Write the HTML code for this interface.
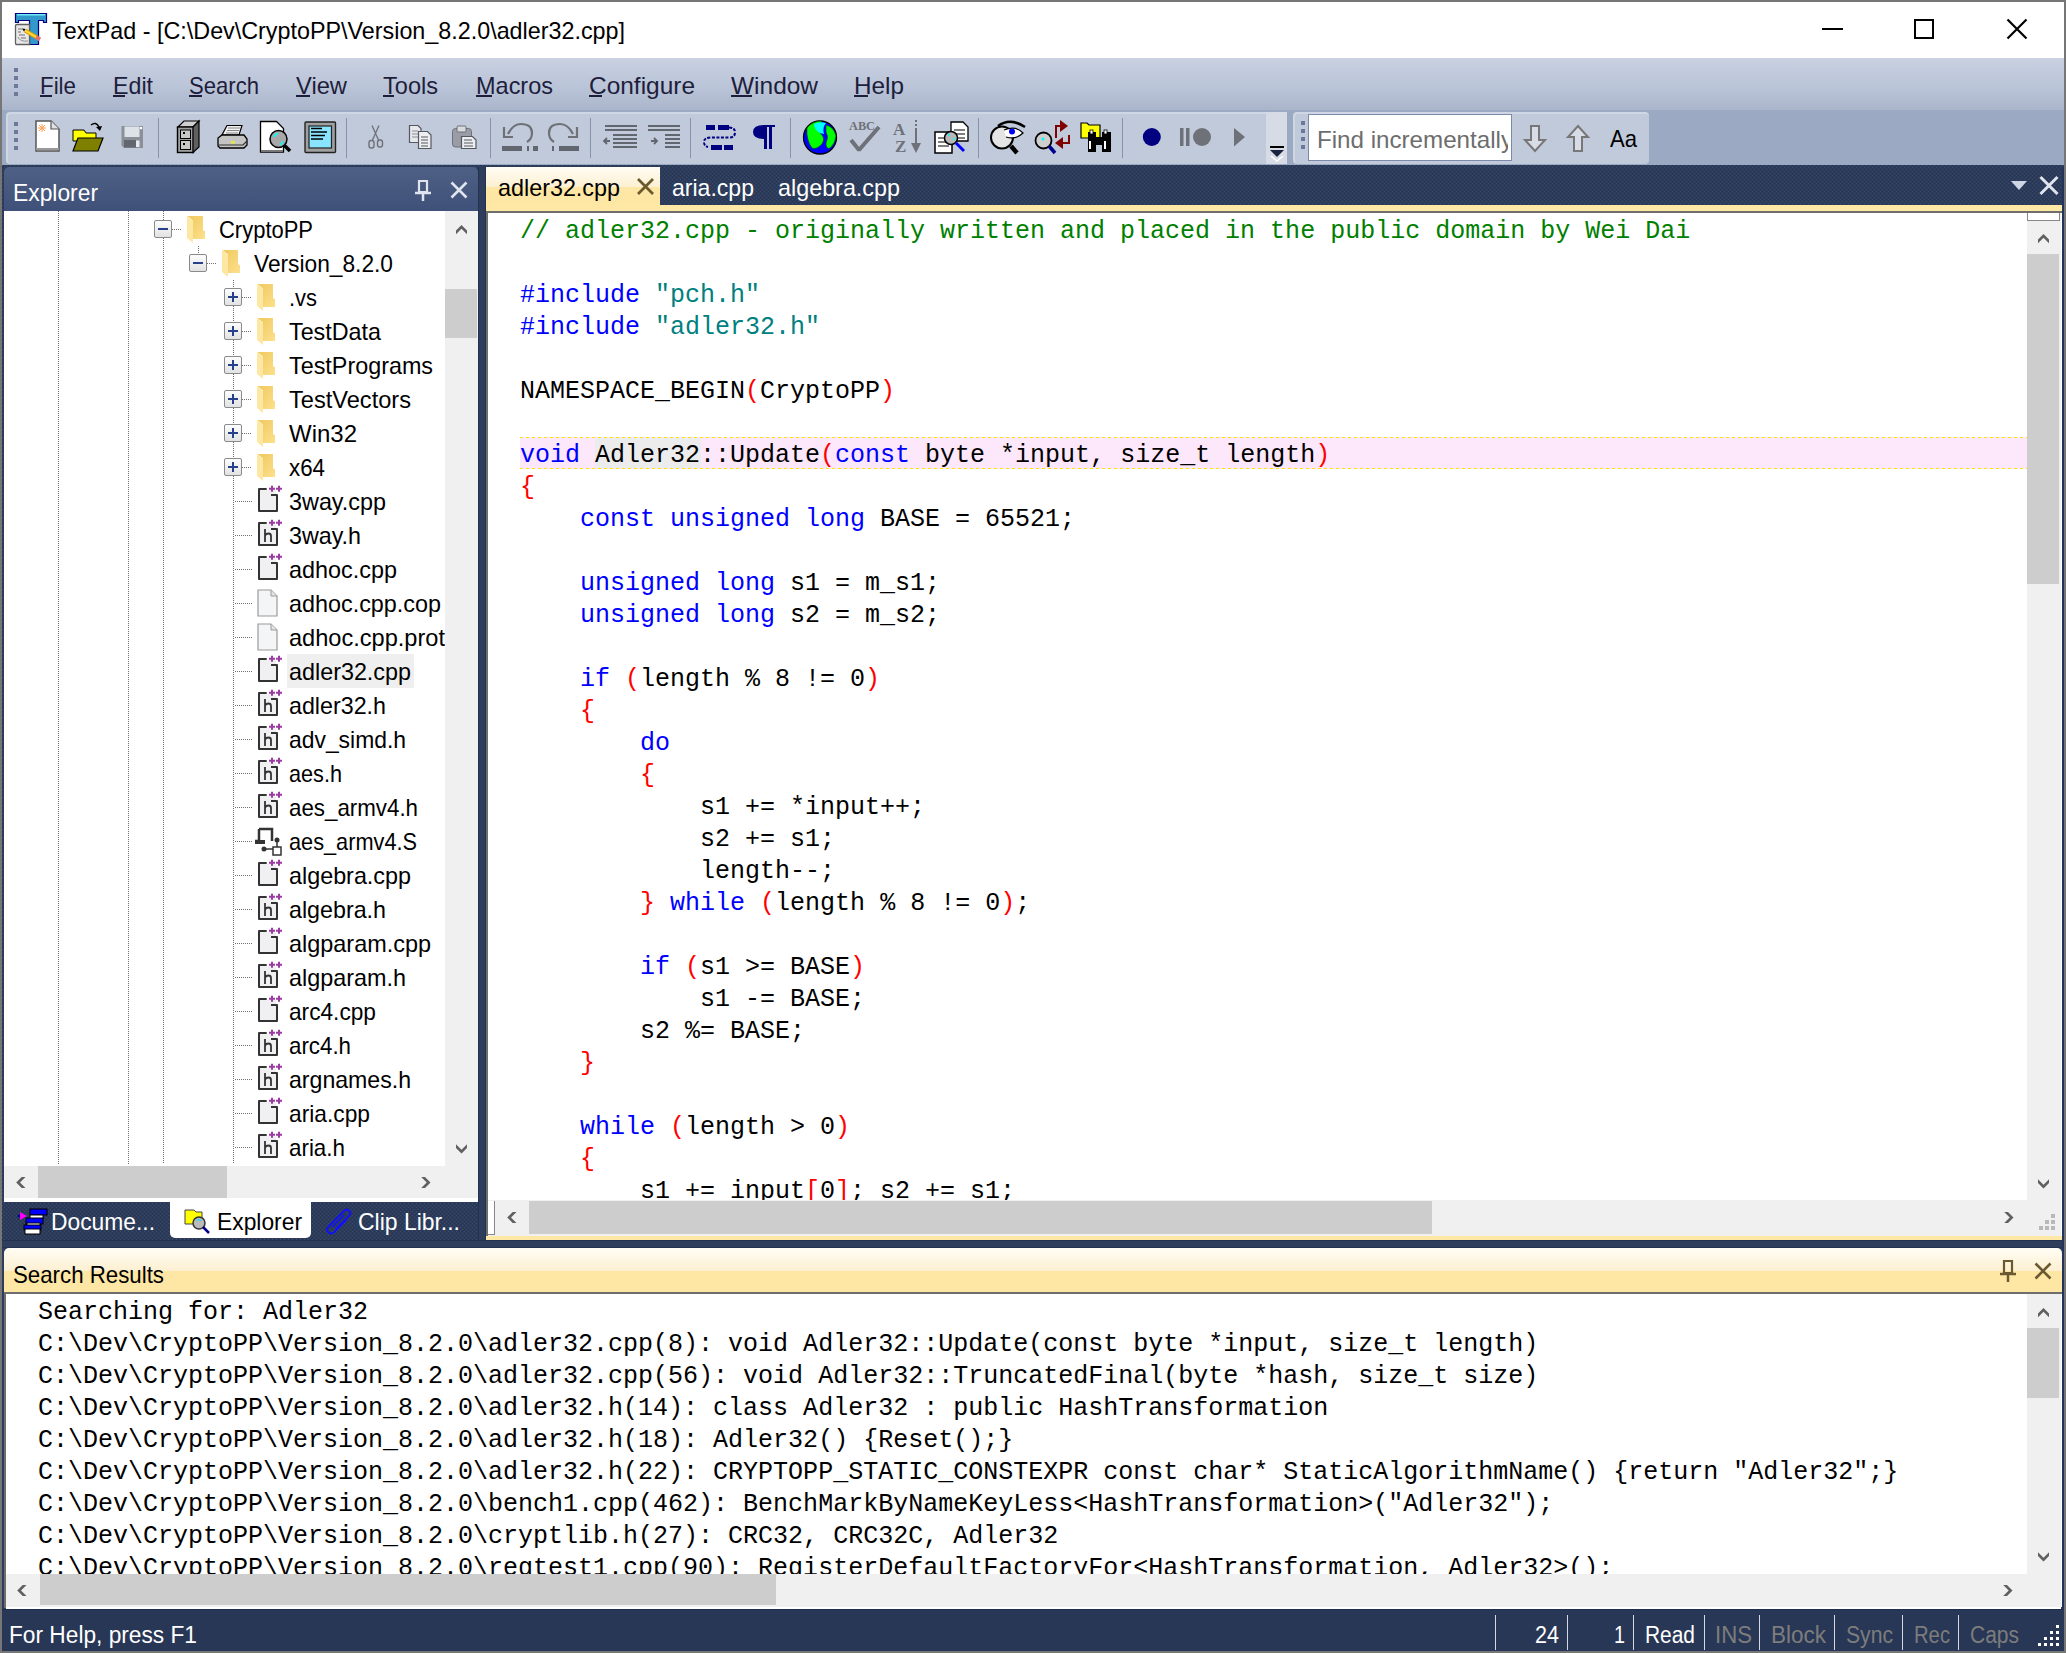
<!DOCTYPE html>
<html><head><meta charset="utf-8"><title>TextPad</title>
<style>
html,body{margin:0;padding:0;width:2066px;height:1653px;overflow:hidden;background:#767676}
.a{position:absolute;display:block}
.t{position:absolute;white-space:pre;transform-origin:0 0}
.cl{position:absolute;white-space:pre;font-family:'Liberation Mono', monospace;font-size:25px;line-height:32px;color:#000}
svg.a{overflow:visible}
</style></head><body>
<div class="a" style="left:0px;top:0px;width:2066px;height:1653px;background:#767676"></div>
<div class="a" style="left:2px;top:2px;width:2062px;height:56px;background:#fff"></div>
<svg class="a" style="left:0px;top:0px;" width="50" height="50" viewBox="0 0 50 50">
<path d="M15.5 13.5H46.5V22.5H43.5V20.5H38.5V44.5H29.5V20.5H18.5V22.5H15.5Z" fill="#3399cc" stroke="#000080" stroke-width="1.2"/>
<path d="M17 14.8H45" stroke="#80ffff" stroke-width="1.2"/>
<path d="M15.5 25.5Q15.5 24.5 17 24.5H29.5V44.5H16Q15.5 44.5 15.5 43Z" fill="#e8e8e8" stroke="#606060" stroke-width="1.3"/>
<path d="M18 29H22M18 32H21M19 35H25M21 38H26" stroke="#707070" stroke-width="1"/>
<path d="M18 37Q20 42 28 41" fill="none" stroke="#909090" stroke-width="1"/>
<path d="M25 30.5L37 37.5" stroke="#e0a000" stroke-width="4.2"/>
<path d="M25 30.5L37 37.5" stroke="#ffe040" stroke-width="2"/>
<path d="M36 37L40 39.5" stroke="#e07070" stroke-width="4.2"/>
<path d="M22 28.5L25.5 29L24 31.5Z" fill="#000"/>
</svg>
<div class="t" id="t1" style="left:52px;top:15.68px;font-size:24px;line-height:30px;font-family:'Liberation Sans', sans-serif;color:#000;transform:scaleX(0.9718);">TextPad - [C:\Dev\CryptoPP\Version_8.2.0\adler32.cpp]</div>
<div class="a" style="left:1822px;top:28px;width:21px;height:2px;background:#000"></div>
<div class="a" style="left:1914px;top:19px;width:20px;height:20px;border:2px solid #000;box-sizing:border-box"></div>
<svg class="a" style="left:2006px;top:18px;" width="22" height="22" viewBox="0 0 22 22"><path d="M1.5 1.5L20.5 20.5M20.5 1.5L1.5 20.5" stroke="#000" stroke-width="2.2"/></svg>
<div class="a" style="left:2px;top:58px;width:2062px;height:52px;background:linear-gradient(#c9d1e2,#b9c3d7 60%,#aab5cb)"></div>
<div class="a" style="left:14px;top:68px;width:4px;height:4px;background:#6a7a98"></div>
<div class="a" style="left:14px;top:76px;width:4px;height:4px;background:#6a7a98"></div>
<div class="a" style="left:14px;top:84px;width:4px;height:4px;background:#6a7a98"></div>
<div class="a" style="left:14px;top:92px;width:4px;height:4px;background:#6a7a98"></div>
<div class="t" id="t2" style="left:40px;top:70.68px;font-size:24px;line-height:30px;font-family:'Liberation Sans', sans-serif;color:#1e1e3c;transform:scaleX(0.9309);">File</div>
<div class="t" id="t3" style="left:113px;top:70.68px;font-size:24px;line-height:30px;font-family:'Liberation Sans', sans-serif;color:#1e1e3c;transform:scaleX(0.9671);">Edit</div>
<div class="t" id="t4" style="left:189px;top:70.68px;font-size:24px;line-height:30px;font-family:'Liberation Sans', sans-serif;color:#1e1e3c;transform:scaleX(0.9205);">Search</div>
<div class="t" id="t5" style="left:296px;top:70.68px;font-size:24px;line-height:30px;font-family:'Liberation Sans', sans-serif;color:#1e1e3c;transform:scaleX(0.9885);">View</div>
<div class="t" id="t6" style="left:383px;top:70.68px;font-size:24px;line-height:30px;font-family:'Liberation Sans', sans-serif;color:#1e1e3c;transform:scaleX(0.9816);">Tools</div>
<div class="t" id="t7" style="left:476px;top:70.68px;font-size:24px;line-height:30px;font-family:'Liberation Sans', sans-serif;color:#1e1e3c;transform:scaleX(0.9786);">Macros</div>
<div class="t" id="t8" style="left:589px;top:70.68px;font-size:24px;line-height:30px;font-family:'Liberation Sans', sans-serif;color:#1e1e3c;transform:scaleX(1.0186);">Configure</div>
<div class="t" id="t9" style="left:731px;top:70.68px;font-size:24px;line-height:30px;font-family:'Liberation Sans', sans-serif;color:#1e1e3c;transform:scaleX(1.0192);">Window</div>
<div class="t" id="t10" style="left:854px;top:70.68px;font-size:24px;line-height:30px;font-family:'Liberation Sans', sans-serif;color:#1e1e3c;transform:scaleX(1.0130);">Help</div>
<div class="a" style="left:40px;top:95px;width:12px;height:2px;background:#1e1e3c"></div>
<div class="a" style="left:113px;top:95px;width:12px;height:2px;background:#1e1e3c"></div>
<div class="a" style="left:189px;top:95px;width:13px;height:2px;background:#1e1e3c"></div>
<div class="a" style="left:296px;top:95px;width:14px;height:2px;background:#1e1e3c"></div>
<div class="a" style="left:383px;top:95px;width:11px;height:2px;background:#1e1e3c"></div>
<div class="a" style="left:476px;top:95px;width:16px;height:2px;background:#1e1e3c"></div>
<div class="a" style="left:589px;top:95px;width:13px;height:2px;background:#1e1e3c"></div>
<div class="a" style="left:731px;top:95px;width:21px;height:2px;background:#1e1e3c"></div>
<div class="a" style="left:854px;top:95px;width:14px;height:2px;background:#1e1e3c"></div>
<div class="a" style="left:2px;top:110px;width:2062px;height:55px;background:#9ba9c2"></div>
<div class="a" style="left:6px;top:112px;width:1281px;height:52px;background:#c1cadb;border-radius:4px;border-left:2px solid #d0d7e4;border-top:2px solid #d0d7e4;box-sizing:border-box"></div>
<div class="a" style="left:1266px;top:112px;width:21px;height:52px;background:#d6dbe6"></div>
<div class="a" style="left:1293px;top:112px;width:356px;height:52px;background:#c1cadb;border-radius:4px;border-left:2px solid #d0d7e4;border-top:2px solid #d0d7e4;box-sizing:border-box"></div>
<div class="a" style="left:14px;top:122px;width:4px;height:4px;background:#6a7a98"></div>
<div class="a" style="left:14px;top:130px;width:4px;height:4px;background:#6a7a98"></div>
<div class="a" style="left:14px;top:138px;width:4px;height:4px;background:#6a7a98"></div>
<div class="a" style="left:14px;top:146px;width:4px;height:4px;background:#6a7a98"></div>
<div class="a" style="left:1301px;top:121px;width:4px;height:4px;background:#6a7a98"></div>
<div class="a" style="left:1301px;top:129px;width:4px;height:4px;background:#6a7a98"></div>
<div class="a" style="left:1301px;top:137px;width:4px;height:4px;background:#6a7a98"></div>
<div class="a" style="left:1301px;top:145px;width:4px;height:4px;background:#6a7a98"></div>
<div class="a" style="left:158px;top:118px;width:1px;height:40px;background:#8793aa"></div>
<div class="a" style="left:346px;top:118px;width:1px;height:40px;background:#8793aa"></div>
<div class="a" style="left:490px;top:118px;width:1px;height:40px;background:#8793aa"></div>
<div class="a" style="left:590px;top:118px;width:1px;height:40px;background:#8793aa"></div>
<div class="a" style="left:690px;top:118px;width:1px;height:40px;background:#8793aa"></div>
<div class="a" style="left:790px;top:118px;width:1px;height:40px;background:#8793aa"></div>
<div class="a" style="left:978px;top:118px;width:1px;height:40px;background:#8793aa"></div>
<div class="a" style="left:1122px;top:118px;width:1px;height:40px;background:#8793aa"></div>
<svg class="a" style="left:35px;top:120px;" width="26" height="33" viewBox="0 0 26 33"><path d="M1 1H16L24 9V31H1Z" fill="#fff" stroke="#555" stroke-width="1.5"/><path d="M16 1V9H24" fill="#e0e0e0" stroke="#555" stroke-width="1.2"/><path d="M1 29H24" stroke="#999" stroke-width="2"/><path d="M7 4v8M3 8h8M4 5l6 6M10 5l-6 6" stroke="#ff9c4a" stroke-width="1"/></svg>
<svg class="a" style="left:72px;top:121px;" width="32" height="32" viewBox="0 0 32 32"><path d="M1 9H12L14 12H24V20H1Z" fill="#ffff00" stroke="#000" stroke-width="1"/><path d="M1 30L6 17H31L26 30Z" fill="#808000" stroke="#000" stroke-width="1.2"/><path d="M19 4Q24 0 27 6" fill="none" stroke="#000" stroke-width="1.5"/><path d="M24 6L30 5L28 10Z" fill="#000"/></svg>
<svg class="a" style="left:120px;top:125px;" width="25" height="25" viewBox="0 0 25 25"><g transform="translate(-120,-125)"><path d="M121.5 126H143V148H124L121.5 145.5Z" fill="#8a8f98"/><rect x="124.5" y="126.5" width="15" height="10.5" fill="#dde1e8"/><rect x="140" y="127" width="2.2" height="2.2" fill="#fff"/><rect x="124" y="140" width="12" height="7.5" fill="#62666e"/><rect x="136" y="140.5" width="3.5" height="6.5" fill="#e6e9ee"/></g></svg>
<svg class="a" style="left:170px;top:115px;" width="170" height="43" viewBox="0 0 170 43"><g transform="translate(-170,-115)"><path d="M178 127L184 121H199L193 127Z" fill="#d0d0d0" stroke="#000" stroke-width="1.2"/><rect x="177.5" y="127" width="16" height="25.5" fill="#a0a0a0" stroke="#000" stroke-width="1.4"/><path d="M193 127L199 121V147L193 152.5Z" fill="#606060" stroke="#000" stroke-width="1.2"/><rect x="180.5" y="130" width="10" height="8.5" fill="#c8c8c8" stroke="#000" stroke-width="1"/><rect x="180.5" y="140.5" width="10" height="9" fill="#c8c8c8" stroke="#000" stroke-width="1"/><rect x="183" y="132" width="2" height="2" fill="#000"/><rect x="183" y="143" width="2" height="2" fill="#000"/><path d="M227 125.5H242L239 135H222Z" fill="#f0f0f0" stroke="#000" stroke-width="1.2"/><path d="M228 128H240M227 130.5H239M226 133H238" stroke="#888" stroke-width="1"/><path d="M218 138L222 135H244L247 139V145L244 148H220L218 146Z" fill="#c4c4c4" stroke="#000" stroke-width="1.3"/><rect x="231" y="141" width="4" height="2.5" fill="#e8e840"/><path d="M219 145H243L247 141" stroke="#333" stroke-width="1.2" fill="none"/><path d="M260.5 121.5H276.5L283.5 128.5V152H260.5Z" fill="#fff" stroke="#000" stroke-width="1.3"/><path d="M261 151H283" stroke="#777" stroke-width="2"/><circle cx="278.5" cy="139" r="8.5" fill="#a8a8a8" stroke="#000" stroke-width="1.5"/><path d="M274 137Q275 134 278 133.5M283 141Q282 144 280 145" stroke="#00ffff" stroke-width="1.6" fill="none"/><path d="M284.5 145.5L290 151" stroke="#000" stroke-width="3.5"/><rect x="305" y="122" width="30.5" height="30.5" rx="1" fill="#a0a0a0" stroke="#222" stroke-width="1.4"/><rect x="309" y="126" width="22.5" height="22" fill="#88e4ff" stroke="#222" stroke-width="1.2"/><path d="M311 128.5H322M311 132H327M311 135.5H325M311 139H323" stroke="#000" stroke-width="1.4"/></g></svg>
<svg class="a" style="left:360px;top:110px;" width="330" height="55" viewBox="0 0 330 55"><g transform="translate(-360,-110)"><path d="M372 125.5L378.5 140M379 125.5L372.5 140" stroke="#6e7178" stroke-width="1.3"/><rect x="369" y="140.5" width="5" height="7.5" rx="2.2" fill="none" stroke="#6e7178" stroke-width="1.4"/><rect x="377.5" y="140" width="5" height="7" rx="2.2" fill="none" stroke="#6e7178" stroke-width="1.4"/><path d="M409.5 125.5H418L421 128.5V142.5H409.5Z" fill="#e6e8ec" stroke="#55585f" stroke-width="1.2"/><path d="M412 131H418M412 134H418M412 137H418" stroke="#8a8d94" stroke-width="1"/><path d="M418.5 131.5H427.5L431 135V148.5H418.5Z" fill="#eceef2" stroke="#55585f" stroke-width="1.2"/><path d="M421 137H428M421 140H428M421 143H428M421 146H428" stroke="#55585f" stroke-width="1"/><rect x="452.5" y="128.5" width="19" height="18.5" rx="3" fill="#9a9da5" stroke="#6e7178" stroke-width="1"/><rect x="457" y="126" width="9" height="6" rx="1" fill="#d8dade" stroke="#6e7178" stroke-width="1"/><path d="M461.5 136.5H472.5L476 140V148.5H461.5Z" fill="#eceef2" stroke="#55585f" stroke-width="1.2"/><path d="M464 140H472M464 143H473M464 146H473" stroke="#55585f" stroke-width="1"/><path d="M508 134Q513 124 521 124Q532 124 532 133Q532 139 527 142" fill="none" stroke="#6e7178" stroke-width="2.2"/><path d="M504 127V137H513" fill="none" stroke="#6e7178" stroke-width="2.2"/><rect x="502" y="146" width="20" height="5" fill="#62666e"/><rect x="527" y="146" width="2" height="5" fill="#62666e"/><rect x="533" y="146" width="5" height="5" fill="#62666e"/><path d="M573 134Q568 124 560 124Q549 124 549 133Q549 139 554 142" fill="none" stroke="#6e7178" stroke-width="2.2"/><path d="M577 127V137H568" fill="none" stroke="#6e7178" stroke-width="2.2"/><rect x="559" y="146" width="20" height="5" fill="#62666e"/><rect x="552" y="146" width="2" height="5" fill="#62666e"/><path d="M605 126H637M605 130H637M613 135H637M613 139H637M613 143H637M613 147H637" stroke="#62666e" stroke-width="2"/><path d="M610 141H604M607 138L604 141L607 144" fill="none" stroke="#62666e" stroke-width="1.8"/><path d="M648 126H680M648 130H680M665 135H680M665 139H680M665 143H680M665 147H680" stroke="#62666e" stroke-width="2"/><path d="M651 141H657M654 138L657 141L654 144" fill="none" stroke="#62666e" stroke-width="1.8"/></g></svg>
<svg class="a" style="left:690px;top:110px;" width="600" height="55" viewBox="0 0 600 55"><g transform="translate(-690,-110)"><rect x="706" y="125" width="9" height="5" fill="#000080"/><rect x="718" y="125" width="11" height="5" fill="#000080"/><path d="M729 127.5Q735 127.5 735 132.5Q735 137.5 729 137.5H711Q704 137.5 704 142Q704 146 708 147" fill="none" stroke="#000080" stroke-width="2" stroke-dasharray="3 1.5"/><rect x="711" y="145" width="11" height="5" fill="#000080"/><rect x="724" y="145" width="9" height="5" fill="#000080"/><path d="M764 125H775V127H772V149H769V127H767V149H764V139Q753 139 753 132Q753 125 764 125Z" fill="#000080"/><circle cx="820" cy="137.5" r="16.5" fill="#0000ff" stroke="#000" stroke-width="1.3"/><path d="M807 128Q812 121 822 121Q817 127 820 133Q826 138 822 144Q816 150 812 148Q806 140 807 128Z" fill="#00ff00" stroke="#004000" stroke-width="0.6"/><path d="M814 124Q820 121 826 123Q822 128 824 134Q820 134 817 131Q814 128 814 124Z" fill="#00ffff"/><path d="M826 125Q834 127 836 136Q835 144 830 148Q826 150 826 143Q829 137 826 132Z" fill="#00ff00" stroke="#004000" stroke-width="0.6"/><text x="849" y="130" font-family="Liberation Serif" font-size="12" font-weight="bold" fill="#6e7178" textLength="26" lengthAdjust="spacingAndGlyphs">ABC</text><path d="M851 140L859 150L879 127" fill="none" stroke="#6e7178" stroke-width="4" stroke-linejoin="bevel"/><text x="893" y="135" font-family="Liberation Serif" font-size="17" font-weight="bold" fill="#6e7178">A</text><text x="895" y="152" font-family="Liberation Serif" font-size="17" font-weight="bold" fill="#6e7178">Z</text><path d="M916 120V122M916 124V126M916 128V146" stroke="#6e7178" stroke-width="2"/><path d="M911 143H921L916 153Z" fill="#6e7178"/><path d="M951 122H963L968 127V141H951Z" fill="#fff" stroke="#000" stroke-width="1.3"/><path d="M954 130H965M954 134H965M954 138H965" stroke="#000" stroke-width="1"/><path d="M935 132H952V153H935Z" fill="#fff" stroke="#000" stroke-width="1.5"/><path d="M938 138H949M938 142H949M938 146H949" stroke="#000" stroke-width="1"/><circle cx="951" cy="138" r="6.5" fill="#b8b8b8" stroke="#000" stroke-width="1.5"/><path d="M948 136L950 134M953 140L955 138" stroke="#00ffff" stroke-width="1.2"/><path d="M956 143L964 151" stroke="#0000ff" stroke-width="3"/><path d="M998 126Q1010 117 1025 127" fill="none" stroke="#000" stroke-width="2.5"/><circle cx="1002" cy="137.5" r="11" fill="#e4e4e4" stroke="#000" stroke-width="2"/><path d="M1004 130Q1016 125 1023 133Q1016 140 1006 137" fill="#fff" stroke="#000" stroke-width="1.2"/><circle cx="1012" cy="131.5" r="3" fill="#0000ff"/><path d="M1011 146L1017 153" stroke="#000" stroke-width="4.5"/><circle cx="1043.5" cy="140.5" r="8" fill="#cfcfcf" stroke="#000" stroke-width="1.8"/><circle cx="1043" cy="139" r="1.5" fill="#00ffff"/><path d="M1049 146L1055 153" stroke="#00008b" stroke-width="3.5"/><path d="M1056 138V126H1061" fill="none" stroke="#800000" stroke-width="2"/><path d="M1060 120L1068 126L1060 132Z" fill="#800000"/><path d="M1069 135V143H1062" fill="none" stroke="#800000" stroke-width="2"/><path d="M1063 137L1055 143L1063 149Z" fill="#800000"/><path d="M1081 123H1087L1089 125H1100V138H1081Z" fill="#ffff00" stroke="#000" stroke-width="1.2"/><rect x="1088" y="132" width="8" height="20" fill="#000"/><rect x="1102" y="132" width="9" height="20" fill="#000"/><rect x="1095" y="137" width="8" height="8" fill="#000"/><rect x="1090" y="130" width="3" height="4" fill="#fff" stroke="#000" stroke-width="0.8"/><rect x="1104" y="130" width="3" height="4" fill="#fff" stroke="#000" stroke-width="0.8"/><rect x="1089" y="141" width="2" height="8" fill="#fff"/><rect x="1104" y="141" width="2" height="8" fill="#fff"/><circle cx="1151.8" cy="137" r="9" fill="#000080"/><rect x="1180" y="128" width="3.5" height="18" fill="#6e7178"/><rect x="1186" y="128" width="3.5" height="18" fill="#6e7178"/><circle cx="1202" cy="137" r="9" fill="#6e7178"/><path d="M1234 128L1245 137L1234 146.5Z" fill="#6e7178"/><rect x="1270" y="146" width="14" height="2" fill="#000"/><path d="M1270 150H1284L1277 157Z" fill="#1a2440"/><path d="M1271 156L1277 161L1283 156" stroke="#fff" stroke-width="1.5" fill="none"/></g></svg>
<div class="a" style="left:1308px;top:114px;width:204px;height:47px;background:#fff;border:1px solid #7a8aa8;box-sizing:border-box"></div>
<div class="a" style="left:1310px;top:116px;width:198px;height:43px;overflow:hidden">
<div class="t" id="t11" style="left:7px;top:8.68px;font-size:24px;line-height:30px;font-family:'Liberation Sans', sans-serif;color:#6d6d6d;transform:scaleX(1.0064);">Find incrementally</div>
</div>
<svg class="a" style="left:1524px;top:125px;" width="23" height="28" viewBox="0 0 23 28"><path d="M7 1H15V15H21L11 26L1 15H7Z" fill="#d7dce6" stroke="#777" stroke-width="2"/></svg>
<svg class="a" style="left:1567px;top:124px;" width="23" height="28" viewBox="0 0 23 28"><path d="M7 27H15V13H21L11 2L1 13H7Z" fill="#d7dce6" stroke="#777" stroke-width="2"/></svg>
<div class="t" id="t12" style="left:1610px;top:123.68px;font-size:24px;line-height:30px;font-family:'Liberation Sans', sans-serif;color:#000;transform:scaleX(0.9196);">Aa</div>
<svg class="a" style="left:2px;top:165px" width="2062" height="1444"><defs><pattern id="hatch" x="0" y="0" width="4" height="4" patternUnits="userSpaceOnUse"><rect width="4" height="4" fill="#2b3b59"/><rect x="0" y="0" width="1" height="1" fill="#394c6f"/><rect x="2" y="2" width="1" height="1" fill="#394c6f"/><rect x="2" y="0" width="1" height="1" fill="#27354f"/><rect x="0" y="2" width="1" height="1" fill="#27354f"/></pattern></defs><rect width="2062" height="1444" fill="url(#hatch)"/></svg>
<div class="a" style="left:478px;top:167px;width:8px;height:1081px;background:#2d3d5b;border-left:1px solid #22324f;border-right:1px solid #22324f;box-sizing:border-box"></div>
<div class="a" style="left:2px;top:1240px;width:2062px;height:8px;background:#2d3d5b;border-top:1px solid #22324f;border-bottom:1px solid #22324f;box-sizing:border-box"></div>
<div class="a" style="left:2px;top:1248px;width:2px;height:361px;background:#2d3d5b"></div>
<div class="a" style="left:2061px;top:1248px;width:3px;height:361px;background:#2d3d5b"></div>
<div class="a" style="left:2062px;top:167px;width:2px;height:1442px;background:#23345a"></div>
<div class="a" style="left:4px;top:167px;width:474px;height:44px;background:linear-gradient(#4e6084,#3f5179);border-radius:5px 5px 0 0"></div>
<div class="t" id="t13" style="left:13px;top:177.68px;font-size:24px;line-height:30px;font-family:'Liberation Sans', sans-serif;color:#fff;transform:scaleX(0.9510);">Explorer</div>
<svg class="a" style="left:414px;top:180px;" width="18" height="22" viewBox="0 0 18 22"><path d="M5 1H13V12H5Z" fill="none" stroke="#dfe4ee" stroke-width="2.2"/><path d="M1 13H17" stroke="#dfe4ee" stroke-width="2.5"/><path d="M9 13V21" stroke="#dfe4ee" stroke-width="2.5"/></svg>
<svg class="a" style="left:450px;top:181px;" width="18" height="18" viewBox="0 0 18 18"><path d="M1.5 1.5L16.5 16.5M16.5 1.5L1.5 16.5" stroke="#dfe4ee" stroke-width="2.6"/></svg>
<div class="a" style="left:4px;top:211px;width:441px;height:955px;background:#fff;overflow:hidden"></div>
<div class="a" style="left:58px;top:211px;width:1px;height:953px;background:repeating-linear-gradient(#707070 0 1px,transparent 1px 2px)"></div>
<div class="a" style="left:128px;top:211px;width:1px;height:953px;background:repeating-linear-gradient(#707070 0 1px,transparent 1px 2px)"></div>
<div class="a" style="left:163px;top:211px;width:1px;height:9px;background:repeating-linear-gradient(#707070 0 1px,transparent 1px 2px)"></div>
<div class="a" style="left:163px;top:238px;width:1px;height:926px;background:repeating-linear-gradient(#707070 0 1px,transparent 1px 2px)"></div>
<div class="a" style="left:198px;top:246px;width:1px;height:8px;background:repeating-linear-gradient(#707070 0 1px,transparent 1px 2px)"></div>
<div class="a" style="left:233px;top:280px;width:1px;height:884px;background:repeating-linear-gradient(#707070 0 1px,transparent 1px 2px)"></div>
<svg width="0" height="0" style="position:absolute"><defs><linearGradient id="fg" x1="0" y1="0" x2="1" y2="1"><stop offset="0" stop-color="#efc85e"/><stop offset="1" stop-color="#fde08c"/></linearGradient></defs></svg>
<div class="a" style="left:154px;top:220px;width:18px;height:18px;background:linear-gradient(#fdfdfd,#e2e2e2);border:1px solid #8a8a8a;border-radius:2px;box-sizing:border-box"></div>
<div class="a" style="left:158px;top:228px;width:10px;height:2px;background:#27408b"></div>
<div class="a" style="left:172px;top:229px;width:10px;height:1px;background:repeating-linear-gradient(90deg,#707070 0 1px,transparent 1px 2px)"></div>
<svg class="a" style="left:185px;top:215px;" width="24" height="30" viewBox="0 0 24 30"><path d="M2 1H18V15L20 16.5V24H7Z" fill="url(#fg)"/><path d="M2 1L8 6V28L2 23Z" fill="#fde7a2"/><path d="M2 1L8 6" stroke="#fff3c8" stroke-width="1"/></svg>
<div class="t" id="t14" style="left:219px;top:214.68px;font-size:24px;line-height:30px;font-family:'Liberation Sans', sans-serif;color:#000;transform:scaleX(0.9153);">CryptoPP</div>
<div class="a" style="left:189px;top:254px;width:18px;height:18px;background:linear-gradient(#fdfdfd,#e2e2e2);border:1px solid #8a8a8a;border-radius:2px;box-sizing:border-box"></div>
<div class="a" style="left:193px;top:262px;width:10px;height:2px;background:#27408b"></div>
<div class="a" style="left:207px;top:263px;width:10px;height:1px;background:repeating-linear-gradient(90deg,#707070 0 1px,transparent 1px 2px)"></div>
<svg class="a" style="left:220px;top:249px;" width="24" height="30" viewBox="0 0 24 30"><path d="M2 1H18V15L20 16.5V24H7Z" fill="url(#fg)"/><path d="M2 1L8 6V28L2 23Z" fill="#fde7a2"/><path d="M2 1L8 6" stroke="#fff3c8" stroke-width="1"/></svg>
<div class="t" id="t15" style="left:254px;top:248.68px;font-size:24px;line-height:30px;font-family:'Liberation Sans', sans-serif;color:#000;transform:scaleX(0.9470);">Version_8.2.0</div>
<div class="a" style="left:224px;top:288px;width:18px;height:18px;background:linear-gradient(#fdfdfd,#e2e2e2);border:1px solid #8a8a8a;border-radius:2px;box-sizing:border-box"></div>
<div class="a" style="left:228px;top:296px;width:10px;height:2px;background:#27408b"></div>
<div class="a" style="left:232px;top:292px;width:2px;height:10px;background:#27408b"></div>
<div class="a" style="left:242px;top:297px;width:10px;height:1px;background:repeating-linear-gradient(90deg,#707070 0 1px,transparent 1px 2px)"></div>
<svg class="a" style="left:255px;top:283px;" width="24" height="30" viewBox="0 0 24 30"><path d="M2 1H18V15L20 16.5V24H7Z" fill="url(#fg)"/><path d="M2 1L8 6V28L2 23Z" fill="#fde7a2"/><path d="M2 1L8 6" stroke="#fff3c8" stroke-width="1"/></svg>
<div class="t" id="t16" style="left:289px;top:282.68px;font-size:24px;line-height:30px;font-family:'Liberation Sans', sans-serif;color:#000;transform:scaleX(0.9129);">.vs</div>
<div class="a" style="left:224px;top:322px;width:18px;height:18px;background:linear-gradient(#fdfdfd,#e2e2e2);border:1px solid #8a8a8a;border-radius:2px;box-sizing:border-box"></div>
<div class="a" style="left:228px;top:330px;width:10px;height:2px;background:#27408b"></div>
<div class="a" style="left:232px;top:326px;width:2px;height:10px;background:#27408b"></div>
<div class="a" style="left:242px;top:331px;width:10px;height:1px;background:repeating-linear-gradient(90deg,#707070 0 1px,transparent 1px 2px)"></div>
<svg class="a" style="left:255px;top:317px;" width="24" height="30" viewBox="0 0 24 30"><path d="M2 1H18V15L20 16.5V24H7Z" fill="url(#fg)"/><path d="M2 1L8 6V28L2 23Z" fill="#fde7a2"/><path d="M2 1L8 6" stroke="#fff3c8" stroke-width="1"/></svg>
<div class="t" id="t17" style="left:289px;top:316.68px;font-size:24px;line-height:30px;font-family:'Liberation Sans', sans-serif;color:#000;transform:scaleX(0.9713);">TestData</div>
<div class="a" style="left:224px;top:356px;width:18px;height:18px;background:linear-gradient(#fdfdfd,#e2e2e2);border:1px solid #8a8a8a;border-radius:2px;box-sizing:border-box"></div>
<div class="a" style="left:228px;top:364px;width:10px;height:2px;background:#27408b"></div>
<div class="a" style="left:232px;top:360px;width:2px;height:10px;background:#27408b"></div>
<div class="a" style="left:242px;top:365px;width:10px;height:1px;background:repeating-linear-gradient(90deg,#707070 0 1px,transparent 1px 2px)"></div>
<svg class="a" style="left:255px;top:351px;" width="24" height="30" viewBox="0 0 24 30"><path d="M2 1H18V15L20 16.5V24H7Z" fill="url(#fg)"/><path d="M2 1L8 6V28L2 23Z" fill="#fde7a2"/><path d="M2 1L8 6" stroke="#fff3c8" stroke-width="1"/></svg>
<div class="t" id="t18" style="left:289px;top:350.68px;font-size:24px;line-height:30px;font-family:'Liberation Sans', sans-serif;color:#000;transform:scaleX(0.9727);">TestPrograms</div>
<div class="a" style="left:224px;top:390px;width:18px;height:18px;background:linear-gradient(#fdfdfd,#e2e2e2);border:1px solid #8a8a8a;border-radius:2px;box-sizing:border-box"></div>
<div class="a" style="left:228px;top:398px;width:10px;height:2px;background:#27408b"></div>
<div class="a" style="left:232px;top:394px;width:2px;height:10px;background:#27408b"></div>
<div class="a" style="left:242px;top:399px;width:10px;height:1px;background:repeating-linear-gradient(90deg,#707070 0 1px,transparent 1px 2px)"></div>
<svg class="a" style="left:255px;top:385px;" width="24" height="30" viewBox="0 0 24 30"><path d="M2 1H18V15L20 16.5V24H7Z" fill="url(#fg)"/><path d="M2 1L8 6V28L2 23Z" fill="#fde7a2"/><path d="M2 1L8 6" stroke="#fff3c8" stroke-width="1"/></svg>
<div class="t" id="t19" style="left:289px;top:384.68px;font-size:24px;line-height:30px;font-family:'Liberation Sans', sans-serif;color:#000;transform:scaleX(0.9834);">TestVectors</div>
<div class="a" style="left:224px;top:424px;width:18px;height:18px;background:linear-gradient(#fdfdfd,#e2e2e2);border:1px solid #8a8a8a;border-radius:2px;box-sizing:border-box"></div>
<div class="a" style="left:228px;top:432px;width:10px;height:2px;background:#27408b"></div>
<div class="a" style="left:232px;top:428px;width:2px;height:10px;background:#27408b"></div>
<div class="a" style="left:242px;top:433px;width:10px;height:1px;background:repeating-linear-gradient(90deg,#707070 0 1px,transparent 1px 2px)"></div>
<svg class="a" style="left:255px;top:419px;" width="24" height="30" viewBox="0 0 24 30"><path d="M2 1H18V15L20 16.5V24H7Z" fill="url(#fg)"/><path d="M2 1L8 6V28L2 23Z" fill="#fde7a2"/><path d="M2 1L8 6" stroke="#fff3c8" stroke-width="1"/></svg>
<div class="t" id="t20" style="left:289px;top:418.68px;font-size:24px;line-height:30px;font-family:'Liberation Sans', sans-serif;color:#000;transform:scaleX(0.9995);">Win32</div>
<div class="a" style="left:224px;top:458px;width:18px;height:18px;background:linear-gradient(#fdfdfd,#e2e2e2);border:1px solid #8a8a8a;border-radius:2px;box-sizing:border-box"></div>
<div class="a" style="left:228px;top:466px;width:10px;height:2px;background:#27408b"></div>
<div class="a" style="left:232px;top:462px;width:2px;height:10px;background:#27408b"></div>
<div class="a" style="left:242px;top:467px;width:10px;height:1px;background:repeating-linear-gradient(90deg,#707070 0 1px,transparent 1px 2px)"></div>
<svg class="a" style="left:255px;top:453px;" width="24" height="30" viewBox="0 0 24 30"><path d="M2 1H18V15L20 16.5V24H7Z" fill="url(#fg)"/><path d="M2 1L8 6V28L2 23Z" fill="#fde7a2"/><path d="M2 1L8 6" stroke="#fff3c8" stroke-width="1"/></svg>
<div class="t" id="t21" style="left:289px;top:452.68px;font-size:24px;line-height:30px;font-family:'Liberation Sans', sans-serif;color:#000;transform:scaleX(0.9302);">x64</div>
<div class="a" style="left:235px;top:501px;width:17px;height:1px;background:repeating-linear-gradient(90deg,#707070 0 1px,transparent 1px 2px)"></div>
<svg class="a" style="left:255px;top:484px;" width="30" height="30" viewBox="0 0 30 30"><rect x="5" y="6" width="16" height="20" fill="#f0f0f3"/><path d="M11.7 5H4V27H22V11H16" fill="none" stroke="#333" stroke-width="2" stroke-linejoin="round"/><path d="M14 4.7H20M17 1.7V7.7M21 4.7H27M24 1.7V7.7" stroke="#9b3aa0" stroke-width="2"/></svg>
<div class="t" id="t22" style="left:289px;top:486.68px;font-size:24px;line-height:30px;font-family:'Liberation Sans', sans-serif;color:#000;transform:scaleX(0.9738);">3way.cpp</div>
<div class="a" style="left:235px;top:535px;width:17px;height:1px;background:repeating-linear-gradient(90deg,#707070 0 1px,transparent 1px 2px)"></div>
<svg class="a" style="left:255px;top:518px;" width="30" height="30" viewBox="0 0 30 30"><rect x="5" y="6" width="16" height="20" fill="#f0f0f3"/><path d="M11.7 5H4V27H22V11H16" fill="none" stroke="#333" stroke-width="2" stroke-linejoin="round"/><path d="M10 11V24M10 17.5Q11 15.5 13.5 15.5Q16 15.5 16 18V24" fill="none" stroke="#333" stroke-width="1.8"/><path d="M14 4.7H20M17 1.7V7.7M21 4.7H27M24 1.7V7.7" stroke="#9b3aa0" stroke-width="2"/></svg>
<div class="t" id="t23" style="left:289px;top:520.68px;font-size:24px;line-height:30px;font-family:'Liberation Sans', sans-serif;color:#000;transform:scaleX(0.9695);">3way.h</div>
<div class="a" style="left:235px;top:569px;width:17px;height:1px;background:repeating-linear-gradient(90deg,#707070 0 1px,transparent 1px 2px)"></div>
<svg class="a" style="left:255px;top:552px;" width="30" height="30" viewBox="0 0 30 30"><rect x="5" y="6" width="16" height="20" fill="#f0f0f3"/><path d="M11.7 5H4V27H22V11H16" fill="none" stroke="#333" stroke-width="2" stroke-linejoin="round"/><path d="M14 4.7H20M17 1.7V7.7M21 4.7H27M24 1.7V7.7" stroke="#9b3aa0" stroke-width="2"/></svg>
<div class="t" id="t24" style="left:289px;top:554.68px;font-size:24px;line-height:30px;font-family:'Liberation Sans', sans-serif;color:#000;transform:scaleX(0.9750);">adhoc.cpp</div>
<div class="a" style="left:235px;top:603px;width:17px;height:1px;background:repeating-linear-gradient(90deg,#707070 0 1px,transparent 1px 2px)"></div>
<svg class="a" style="left:257px;top:589px;" width="22" height="28" viewBox="0 0 22 28"><path d="M1 1H14L20 7V27H1Z" fill="#f4f5f7" stroke="#9a9a9a" stroke-width="1.2"/><path d="M14 1V7H20" fill="#e4e4e4" stroke="#9a9a9a" stroke-width="1"/></svg>
<div class="t" id="t25" style="left:289px;top:588.68px;font-size:24px;line-height:30px;font-family:'Liberation Sans', sans-serif;color:#000;transform:scaleX(0.9736);">adhoc.cpp.cop</div>
<div class="a" style="left:235px;top:637px;width:17px;height:1px;background:repeating-linear-gradient(90deg,#707070 0 1px,transparent 1px 2px)"></div>
<svg class="a" style="left:257px;top:623px;" width="22" height="28" viewBox="0 0 22 28"><path d="M1 1H14L20 7V27H1Z" fill="#f4f5f7" stroke="#9a9a9a" stroke-width="1.2"/><path d="M14 1V7H20" fill="#e4e4e4" stroke="#9a9a9a" stroke-width="1"/></svg>
<div class="t" id="t26" style="left:289px;top:622.68px;font-size:24px;line-height:30px;font-family:'Liberation Sans', sans-serif;color:#000;transform:scaleX(0.9825);">adhoc.cpp.prot</div>
<div class="a" style="left:235px;top:671px;width:17px;height:1px;background:repeating-linear-gradient(90deg,#707070 0 1px,transparent 1px 2px)"></div>
<svg class="a" style="left:255px;top:654px;" width="30" height="30" viewBox="0 0 30 30"><rect x="5" y="6" width="16" height="20" fill="#f0f0f3"/><path d="M11.7 5H4V27H22V11H16" fill="none" stroke="#333" stroke-width="2" stroke-linejoin="round"/><path d="M14 4.7H20M17 1.7V7.7M21 4.7H27M24 1.7V7.7" stroke="#9b3aa0" stroke-width="2"/></svg>
<div class="a" style="left:287px;top:654px;width:127px;height:34px;background:#efefef"></div>
<div class="t" id="t27" style="left:289px;top:656.68px;font-size:24px;line-height:30px;font-family:'Liberation Sans', sans-serif;color:#000;transform:scaleX(0.9726);">adler32.cpp</div>
<div class="a" style="left:235px;top:705px;width:17px;height:1px;background:repeating-linear-gradient(90deg,#707070 0 1px,transparent 1px 2px)"></div>
<svg class="a" style="left:255px;top:688px;" width="30" height="30" viewBox="0 0 30 30"><rect x="5" y="6" width="16" height="20" fill="#f0f0f3"/><path d="M11.7 5H4V27H22V11H16" fill="none" stroke="#333" stroke-width="2" stroke-linejoin="round"/><path d="M10 11V24M10 17.5Q11 15.5 13.5 15.5Q16 15.5 16 18V24" fill="none" stroke="#333" stroke-width="1.8"/><path d="M14 4.7H20M17 1.7V7.7M21 4.7H27M24 1.7V7.7" stroke="#9b3aa0" stroke-width="2"/></svg>
<div class="t" id="t28" style="left:289px;top:690.68px;font-size:24px;line-height:30px;font-family:'Liberation Sans', sans-serif;color:#000;transform:scaleX(0.9692);">adler32.h</div>
<div class="a" style="left:235px;top:739px;width:17px;height:1px;background:repeating-linear-gradient(90deg,#707070 0 1px,transparent 1px 2px)"></div>
<svg class="a" style="left:255px;top:722px;" width="30" height="30" viewBox="0 0 30 30"><rect x="5" y="6" width="16" height="20" fill="#f0f0f3"/><path d="M11.7 5H4V27H22V11H16" fill="none" stroke="#333" stroke-width="2" stroke-linejoin="round"/><path d="M10 11V24M10 17.5Q11 15.5 13.5 15.5Q16 15.5 16 18V24" fill="none" stroke="#333" stroke-width="1.8"/><path d="M14 4.7H20M17 1.7V7.7M21 4.7H27M24 1.7V7.7" stroke="#9b3aa0" stroke-width="2"/></svg>
<div class="t" id="t29" style="left:289px;top:724.68px;font-size:24px;line-height:30px;font-family:'Liberation Sans', sans-serif;color:#000;transform:scaleX(0.9533);">adv_simd.h</div>
<div class="a" style="left:235px;top:773px;width:17px;height:1px;background:repeating-linear-gradient(90deg,#707070 0 1px,transparent 1px 2px)"></div>
<svg class="a" style="left:255px;top:756px;" width="30" height="30" viewBox="0 0 30 30"><rect x="5" y="6" width="16" height="20" fill="#f0f0f3"/><path d="M11.7 5H4V27H22V11H16" fill="none" stroke="#333" stroke-width="2" stroke-linejoin="round"/><path d="M10 11V24M10 17.5Q11 15.5 13.5 15.5Q16 15.5 16 18V24" fill="none" stroke="#333" stroke-width="1.8"/><path d="M14 4.7H20M17 1.7V7.7M21 4.7H27M24 1.7V7.7" stroke="#9b3aa0" stroke-width="2"/></svg>
<div class="t" id="t30" style="left:289px;top:758.68px;font-size:24px;line-height:30px;font-family:'Liberation Sans', sans-serif;color:#000;transform:scaleX(0.9026);">aes.h</div>
<div class="a" style="left:235px;top:807px;width:17px;height:1px;background:repeating-linear-gradient(90deg,#707070 0 1px,transparent 1px 2px)"></div>
<svg class="a" style="left:255px;top:790px;" width="30" height="30" viewBox="0 0 30 30"><rect x="5" y="6" width="16" height="20" fill="#f0f0f3"/><path d="M11.7 5H4V27H22V11H16" fill="none" stroke="#333" stroke-width="2" stroke-linejoin="round"/><path d="M10 11V24M10 17.5Q11 15.5 13.5 15.5Q16 15.5 16 18V24" fill="none" stroke="#333" stroke-width="1.8"/><path d="M14 4.7H20M17 1.7V7.7M21 4.7H27M24 1.7V7.7" stroke="#9b3aa0" stroke-width="2"/></svg>
<div class="t" id="t31" style="left:289px;top:792.68px;font-size:24px;line-height:30px;font-family:'Liberation Sans', sans-serif;color:#000;transform:scaleX(0.9297);">aes_armv4.h</div>
<div class="a" style="left:235px;top:841px;width:17px;height:1px;background:repeating-linear-gradient(90deg,#707070 0 1px,transparent 1px 2px)"></div>
<svg class="a" style="left:254px;top:827px;" width="30" height="30" viewBox="0 0 30 30"><path d="M5 2H18V14" fill="none" stroke="#333" stroke-width="2.5"/><path d="M5 2V14H1" fill="none" stroke="#333" stroke-width="2.5"/><rect x="1" y="13" width="10" height="4" fill="#333"/><circle cx="23" cy="13" r="2.5" fill="#333"/><circle cx="10" cy="22" r="2.5" fill="#333"/><path d="M11 22H19M23 13V20" stroke="#333" stroke-width="1.5"/><rect x="19" y="20" width="8" height="8" fill="#fff" stroke="#333" stroke-width="1.5"/></svg>
<div class="t" id="t32" style="left:289px;top:826.68px;font-size:24px;line-height:30px;font-family:'Liberation Sans', sans-serif;color:#000;transform:scaleX(0.9052);">aes_armv4.S</div>
<div class="a" style="left:235px;top:875px;width:17px;height:1px;background:repeating-linear-gradient(90deg,#707070 0 1px,transparent 1px 2px)"></div>
<svg class="a" style="left:255px;top:858px;" width="30" height="30" viewBox="0 0 30 30"><rect x="5" y="6" width="16" height="20" fill="#f0f0f3"/><path d="M11.7 5H4V27H22V11H16" fill="none" stroke="#333" stroke-width="2" stroke-linejoin="round"/><path d="M14 4.7H20M17 1.7V7.7M21 4.7H27M24 1.7V7.7" stroke="#9b3aa0" stroke-width="2"/></svg>
<div class="t" id="t33" style="left:289px;top:860.68px;font-size:24px;line-height:30px;font-family:'Liberation Sans', sans-serif;color:#000;transform:scaleX(0.9726);">algebra.cpp</div>
<div class="a" style="left:235px;top:909px;width:17px;height:1px;background:repeating-linear-gradient(90deg,#707070 0 1px,transparent 1px 2px)"></div>
<svg class="a" style="left:255px;top:892px;" width="30" height="30" viewBox="0 0 30 30"><rect x="5" y="6" width="16" height="20" fill="#f0f0f3"/><path d="M11.7 5H4V27H22V11H16" fill="none" stroke="#333" stroke-width="2" stroke-linejoin="round"/><path d="M10 11V24M10 17.5Q11 15.5 13.5 15.5Q16 15.5 16 18V24" fill="none" stroke="#333" stroke-width="1.8"/><path d="M14 4.7H20M17 1.7V7.7M21 4.7H27M24 1.7V7.7" stroke="#9b3aa0" stroke-width="2"/></svg>
<div class="t" id="t34" style="left:289px;top:894.68px;font-size:24px;line-height:30px;font-family:'Liberation Sans', sans-serif;color:#000;transform:scaleX(0.9692);">algebra.h</div>
<div class="a" style="left:235px;top:943px;width:17px;height:1px;background:repeating-linear-gradient(90deg,#707070 0 1px,transparent 1px 2px)"></div>
<svg class="a" style="left:255px;top:926px;" width="30" height="30" viewBox="0 0 30 30"><rect x="5" y="6" width="16" height="20" fill="#f0f0f3"/><path d="M11.7 5H4V27H22V11H16" fill="none" stroke="#333" stroke-width="2" stroke-linejoin="round"/><path d="M14 4.7H20M17 1.7V7.7M21 4.7H27M24 1.7V7.7" stroke="#9b3aa0" stroke-width="2"/></svg>
<div class="t" id="t35" style="left:289px;top:928.68px;font-size:24px;line-height:30px;font-family:'Liberation Sans', sans-serif;color:#000;transform:scaleX(0.9765);">algparam.cpp</div>
<div class="a" style="left:235px;top:977px;width:17px;height:1px;background:repeating-linear-gradient(90deg,#707070 0 1px,transparent 1px 2px)"></div>
<svg class="a" style="left:255px;top:960px;" width="30" height="30" viewBox="0 0 30 30"><rect x="5" y="6" width="16" height="20" fill="#f0f0f3"/><path d="M11.7 5H4V27H22V11H16" fill="none" stroke="#333" stroke-width="2" stroke-linejoin="round"/><path d="M10 11V24M10 17.5Q11 15.5 13.5 15.5Q16 15.5 16 18V24" fill="none" stroke="#333" stroke-width="1.8"/><path d="M14 4.7H20M17 1.7V7.7M21 4.7H27M24 1.7V7.7" stroke="#9b3aa0" stroke-width="2"/></svg>
<div class="t" id="t36" style="left:289px;top:962.68px;font-size:24px;line-height:30px;font-family:'Liberation Sans', sans-serif;color:#000;transform:scaleX(0.9744);">algparam.h</div>
<div class="a" style="left:235px;top:1011px;width:17px;height:1px;background:repeating-linear-gradient(90deg,#707070 0 1px,transparent 1px 2px)"></div>
<svg class="a" style="left:255px;top:994px;" width="30" height="30" viewBox="0 0 30 30"><rect x="5" y="6" width="16" height="20" fill="#f0f0f3"/><path d="M11.7 5H4V27H22V11H16" fill="none" stroke="#333" stroke-width="2" stroke-linejoin="round"/><path d="M14 4.7H20M17 1.7V7.7M21 4.7H27M24 1.7V7.7" stroke="#9b3aa0" stroke-width="2"/></svg>
<div class="t" id="t37" style="left:289px;top:996.68px;font-size:24px;line-height:30px;font-family:'Liberation Sans', sans-serif;color:#000;transform:scaleX(0.9450);">arc4.cpp</div>
<div class="a" style="left:235px;top:1045px;width:17px;height:1px;background:repeating-linear-gradient(90deg,#707070 0 1px,transparent 1px 2px)"></div>
<svg class="a" style="left:255px;top:1028px;" width="30" height="30" viewBox="0 0 30 30"><rect x="5" y="6" width="16" height="20" fill="#f0f0f3"/><path d="M11.7 5H4V27H22V11H16" fill="none" stroke="#333" stroke-width="2" stroke-linejoin="round"/><path d="M10 11V24M10 17.5Q11 15.5 13.5 15.5Q16 15.5 16 18V24" fill="none" stroke="#333" stroke-width="1.8"/><path d="M14 4.7H20M17 1.7V7.7M21 4.7H27M24 1.7V7.7" stroke="#9b3aa0" stroke-width="2"/></svg>
<div class="t" id="t38" style="left:289px;top:1030.68px;font-size:24px;line-height:30px;font-family:'Liberation Sans', sans-serif;color:#000;transform:scaleX(0.9295);">arc4.h</div>
<div class="a" style="left:235px;top:1079px;width:17px;height:1px;background:repeating-linear-gradient(90deg,#707070 0 1px,transparent 1px 2px)"></div>
<svg class="a" style="left:255px;top:1062px;" width="30" height="30" viewBox="0 0 30 30"><rect x="5" y="6" width="16" height="20" fill="#f0f0f3"/><path d="M11.7 5H4V27H22V11H16" fill="none" stroke="#333" stroke-width="2" stroke-linejoin="round"/><path d="M10 11V24M10 17.5Q11 15.5 13.5 15.5Q16 15.5 16 18V24" fill="none" stroke="#333" stroke-width="1.8"/><path d="M14 4.7H20M17 1.7V7.7M21 4.7H27M24 1.7V7.7" stroke="#9b3aa0" stroke-width="2"/></svg>
<div class="t" id="t39" style="left:289px;top:1064.68px;font-size:24px;line-height:30px;font-family:'Liberation Sans', sans-serif;color:#000;transform:scaleX(0.9625);">argnames.h</div>
<div class="a" style="left:235px;top:1113px;width:17px;height:1px;background:repeating-linear-gradient(90deg,#707070 0 1px,transparent 1px 2px)"></div>
<svg class="a" style="left:255px;top:1096px;" width="30" height="30" viewBox="0 0 30 30"><rect x="5" y="6" width="16" height="20" fill="#f0f0f3"/><path d="M11.7 5H4V27H22V11H16" fill="none" stroke="#333" stroke-width="2" stroke-linejoin="round"/><path d="M14 4.7H20M17 1.7V7.7M21 4.7H27M24 1.7V7.7" stroke="#9b3aa0" stroke-width="2"/></svg>
<div class="t" id="t40" style="left:289px;top:1098.68px;font-size:24px;line-height:30px;font-family:'Liberation Sans', sans-serif;color:#000;transform:scaleX(0.9486);">aria.cpp</div>
<div class="a" style="left:235px;top:1147px;width:17px;height:1px;background:repeating-linear-gradient(90deg,#707070 0 1px,transparent 1px 2px)"></div>
<svg class="a" style="left:255px;top:1130px;" width="30" height="30" viewBox="0 0 30 30"><rect x="5" y="6" width="16" height="20" fill="#f0f0f3"/><path d="M11.7 5H4V27H22V11H16" fill="none" stroke="#333" stroke-width="2" stroke-linejoin="round"/><path d="M10 11V24M10 17.5Q11 15.5 13.5 15.5Q16 15.5 16 18V24" fill="none" stroke="#333" stroke-width="1.8"/><path d="M14 4.7H20M17 1.7V7.7M21 4.7H27M24 1.7V7.7" stroke="#9b3aa0" stroke-width="2"/></svg>
<div class="t" id="t41" style="left:289px;top:1132.68px;font-size:24px;line-height:30px;font-family:'Liberation Sans', sans-serif;color:#000;transform:scaleX(0.9326);">aria.h</div>
<div class="a" style="left:445px;top:211px;width:33px;height:955px;background:#f0f0f0"></div>
<svg class="a" style="left:456px;top:225px;" width="11" height="10" viewBox="0 0 11 10"><path d="M0 5.5L5.5 0L11 5.5V9.3L5.5 3.8L0 9.3Z" fill="#606060"/></svg>
<div class="a" style="left:445px;top:289px;width:32px;height:49px;background:#cdcdcd"></div>
<svg class="a" style="left:456px;top:1144px;" width="11" height="10" viewBox="0 0 11 10"><path d="M0 0.2L5.5 5.7L11 0.2V4L5.5 9.5L0 4Z" fill="#606060"/></svg>
<div class="a" style="left:4px;top:1166px;width:474px;height:32px;background:#f0f0f0"></div>
<div class="a" style="left:38px;top:1166px;width:189px;height:32px;background:#cdcdcd"></div>
<svg class="a" style="left:16px;top:1177px;" width="10" height="11" viewBox="0 0 10 11"><path d="M9.5 0L4 5.5L9.5 11H5.7L0.2 5.5L5.7 0Z" fill="#606060"/></svg>
<svg class="a" style="left:421px;top:1177px;" width="10" height="11" viewBox="0 0 10 11"><path d="M0.2 0L5.7 5.5L0.2 11H4L9.5 5.5L4 0Z" fill="#606060"/></svg>
<div class="a" style="left:4px;top:1198px;width:474px;height:4px;background:#fff"></div>
<div class="a" style="left:170px;top:1200px;width:141px;height:38px;background:#fff;border-radius:0 0 5px 5px"></div>
<svg class="a" style="left:16px;top:1208px;" width="32" height="26" viewBox="0 0 32 26"><path d="M1 8L5 5L8 8L5 11Z" fill="#00008b"/><path d="M4 4L11 8L4 12Z" fill="#ff00ff"/><rect x="14" y="1" width="17" height="6" fill="#0000ff" stroke="#000"/><rect x="14" y="7" width="13" height="4" fill="#fff" stroke="#000"/><rect x="10" y="10" width="17" height="6" fill="#0000ff" stroke="#000"/><rect x="11" y="15" width="13" height="4" fill="#fff" stroke="#000"/><rect x="8" y="17" width="17" height="5" fill="#0000ff" stroke="#000"/><rect x="9" y="21" width="15" height="5" fill="#fff" stroke="#000"/></svg>
<div class="t" id="t42" style="left:51px;top:1206.68px;font-size:24px;line-height:30px;font-family:'Liberation Sans', sans-serif;color:#fff;transform:scaleX(0.9509);">Docume...</div>
<svg class="a" style="left:184px;top:1208px;" width="27" height="27" viewBox="0 0 27 27"><path d="M1 2H10L12 4H18V16H1Z" fill="#ffff00" stroke="#444" stroke-width="1"/><circle cx="15" cy="15" r="6" fill="#bbb" stroke="#333" stroke-width="1.5"/><path d="M13 12q2-1 4 1" stroke="#00e0ff" stroke-width="1.2" fill="none"/><path d="M19 19L25 25" stroke="#00008b" stroke-width="2.5"/></svg>
<div class="t" id="t43" style="left:217px;top:1206.68px;font-size:24px;line-height:30px;font-family:'Liberation Sans', sans-serif;color:#000;transform:scaleX(0.9510);">Explorer</div>
<svg class="a" style="left:324px;top:1206px;" width="30" height="30" viewBox="0 0 30 30"><g transform="translate(15 15) rotate(45)"><path d="M3.5 8V-11Q3.5 -14.5 0 -14.5Q-3.5 -14.5 -3.5 -11V11Q-3.5 15.5 0 15.5Q4.5 15.5 4.5 11V-6" fill="none" stroke="#1010ff" stroke-width="1.8"/><path d="M-0.5 -8V9" fill="none" stroke="#1010ff" stroke-width="1.6"/></g></svg>
<div class="t" id="t44" style="left:358px;top:1206.68px;font-size:24px;line-height:30px;font-family:'Liberation Sans', sans-serif;color:#fff;transform:scaleX(0.9558);">Clip Libr...</div>
<div class="a" style="left:486px;top:167px;width:174px;height:44px;background:linear-gradient(#fffdf4,#fdf0d2 45%,#fee7a4 46%,#fee7a4)"></div>
<div class="a" style="left:486px;top:205px;width:1576px;height:6px;background:#ffe8a6"></div>
<div class="t" id="t45" style="left:498px;top:172.68px;font-size:24px;line-height:30px;font-family:'Liberation Sans', sans-serif;color:#000;transform:scaleX(0.9726);">adler32.cpp</div>
<svg class="a" style="left:636px;top:177px;" width="19" height="19" viewBox="0 0 19 19"><path d="M2 2L17 17M17 2L2 17" stroke="#6b5a30" stroke-width="2.8"/></svg>
<div class="t" id="t46" style="left:672px;top:172.68px;font-size:24px;line-height:30px;font-family:'Liberation Sans', sans-serif;color:#fff;transform:scaleX(0.9603);">aria.cpp</div>
<div class="t" id="t47" style="left:778px;top:172.68px;font-size:24px;line-height:30px;font-family:'Liberation Sans', sans-serif;color:#fff;transform:scaleX(0.9726);">algebra.cpp</div>
<svg class="a" style="left:2010px;top:180px;" width="18" height="11" viewBox="0 0 18 11"><path d="M1 1H17L9 10Z" fill="#cfd6e4"/></svg>
<svg class="a" style="left:2038px;top:175px;" width="22" height="21" viewBox="0 0 22 21"><path d="M2.5 2L19.5 19M19.5 2L2.5 19" stroke="#dfe4ee" stroke-width="3"/></svg>
<div class="a" style="left:486px;top:211px;width:1576px;height:1025px;background:#fff;border-top:2px solid #6e6e6e;border-left:2px solid #6e6e6e;box-sizing:border-box"></div>
<div class="a" style="left:520px;top:437px;width:1507px;height:32px;background:#fde8fb"></div>
<div class="a" style="left:520px;top:437px;width:1507px;height:1px;background:repeating-linear-gradient(90deg,#ffe400 0 3px,transparent 3px 6px)"></div>
<div class="a" style="left:520px;top:468px;width:1507px;height:1px;background:repeating-linear-gradient(90deg,#ffe400 0 3px,transparent 3px 6px)"></div>
<div class="a" style="left:595px;top:438px;width:106px;height:30px;background:#ececec"></div>
<div class="a" style="left:488px;top:213px;width:1539px;height:987px;overflow:hidden">
<div class="cl" style="left:32px;top:2.95px"><span style="color:#008000">// adler32.cpp - originally written and placed in the public domain by Wei Dai</span></div>
<div class="cl" style="left:32px;top:66.95px"><span style="color:#0000ff">#include </span><span style="color:#008080">&quot;pch.h&quot;</span></div>
<div class="cl" style="left:32px;top:98.95px"><span style="color:#0000ff">#include </span><span style="color:#008080">&quot;adler32.h&quot;</span></div>
<div class="cl" style="left:32px;top:162.95px"><span style="color:#000">NAMESPACE_BEGIN</span><span style="color:#ff0000">(</span><span style="color:#000">CryptoPP</span><span style="color:#ff0000">)</span></div>
<div class="cl" style="left:32px;top:226.95px"><span style="color:#0000ff">void</span><span style="color:#000"> Adler32::Update</span><span style="color:#ff0000">(</span><span style="color:#0000ff">const</span><span style="color:#000"> byte *input, size_t length</span><span style="color:#ff0000">)</span></div>
<div class="cl" style="left:32px;top:258.95px"><span style="color:#ff0000">{</span></div>
<div class="cl" style="left:32px;top:290.95px"><span style="color:#000">    </span><span style="color:#0000ff">const unsigned long</span><span style="color:#000"> BASE = 65521;</span></div>
<div class="cl" style="left:32px;top:354.95px"><span style="color:#000">    </span><span style="color:#0000ff">unsigned long</span><span style="color:#000"> s1 = m_s1;</span></div>
<div class="cl" style="left:32px;top:386.95px"><span style="color:#000">    </span><span style="color:#0000ff">unsigned long</span><span style="color:#000"> s2 = m_s2;</span></div>
<div class="cl" style="left:32px;top:450.95px"><span style="color:#000">    </span><span style="color:#0000ff">if</span><span style="color:#000"> </span><span style="color:#ff0000">(</span><span style="color:#000">length % 8 != 0</span><span style="color:#ff0000">)</span></div>
<div class="cl" style="left:32px;top:482.95px"><span style="color:#000">    </span><span style="color:#ff0000">{</span></div>
<div class="cl" style="left:32px;top:514.95px"><span style="color:#000">        </span><span style="color:#0000ff">do</span></div>
<div class="cl" style="left:32px;top:546.95px"><span style="color:#000">        </span><span style="color:#ff0000">{</span></div>
<div class="cl" style="left:32px;top:578.95px"><span style="color:#000">            s1 += *input++;</span></div>
<div class="cl" style="left:32px;top:610.95px"><span style="color:#000">            s2 += s1;</span></div>
<div class="cl" style="left:32px;top:642.95px"><span style="color:#000">            length--;</span></div>
<div class="cl" style="left:32px;top:674.95px"><span style="color:#000">        </span><span style="color:#ff0000">}</span><span style="color:#000"> </span><span style="color:#0000ff">while</span><span style="color:#000"> </span><span style="color:#ff0000">(</span><span style="color:#000">length % 8 != 0</span><span style="color:#ff0000">)</span><span style="color:#000">;</span></div>
<div class="cl" style="left:32px;top:738.95px"><span style="color:#000">        </span><span style="color:#0000ff">if</span><span style="color:#000"> </span><span style="color:#ff0000">(</span><span style="color:#000">s1 &gt;= BASE</span><span style="color:#ff0000">)</span></div>
<div class="cl" style="left:32px;top:770.95px"><span style="color:#000">            s1 -= BASE;</span></div>
<div class="cl" style="left:32px;top:802.95px"><span style="color:#000">        s2 %= BASE;</span></div>
<div class="cl" style="left:32px;top:834.95px"><span style="color:#000">    </span><span style="color:#ff0000">}</span></div>
<div class="cl" style="left:32px;top:898.95px"><span style="color:#000">    </span><span style="color:#0000ff">while</span><span style="color:#000"> </span><span style="color:#ff0000">(</span><span style="color:#000">length &gt; 0</span><span style="color:#ff0000">)</span></div>
<div class="cl" style="left:32px;top:930.95px"><span style="color:#000">    </span><span style="color:#ff0000">{</span></div>
<div class="cl" style="left:32px;top:962.95px"><span style="color:#000">        s1 += input</span><span style="color:#ff0000">[</span><span style="color:#000">0</span><span style="color:#ff0000">]</span><span style="color:#000">; s2 += s1;</span></div>
</div>
<div class="a" style="left:2027px;top:213px;width:34px;height:987px;background:#f0f0f0"></div>
<div class="a" style="left:2027px;top:213px;width:33px;height:8px;background:#fff;border:1px solid #888;border-top:none;box-sizing:border-box"></div>
<svg class="a" style="left:2038px;top:234px;" width="11" height="10" viewBox="0 0 11 10"><path d="M0 5.5L5.5 0L11 5.5V9.3L5.5 3.8L0 9.3Z" fill="#606060"/></svg>
<div class="a" style="left:2027px;top:254px;width:32px;height:330px;background:#cdcdcd"></div>
<svg class="a" style="left:2038px;top:1179px;" width="11" height="10" viewBox="0 0 11 10"><path d="M0 0.2L5.5 5.7L11 0.2V4L5.5 9.5L0 4Z" fill="#606060"/></svg>
<div class="a" style="left:488px;top:1200px;width:1573px;height:36px;background:#f0f0f0"></div>
<div class="a" style="left:488px;top:1201px;width:7px;height:34px;background:#fff;border-right:1px solid #888;border-bottom:1px solid #888;box-sizing:border-box"></div>
<div class="a" style="left:529px;top:1201px;width:903px;height:33px;background:#cdcdcd"></div>
<svg class="a" style="left:507px;top:1212px;" width="10" height="11" viewBox="0 0 10 11"><path d="M9.5 0L4 5.5L9.5 11H5.7L0.2 5.5L5.7 0Z" fill="#606060"/></svg>
<svg class="a" style="left:2004px;top:1212px;" width="10" height="11" viewBox="0 0 10 11"><path d="M0.2 0L5.7 5.5L0.2 11H4L9.5 5.5L4 0Z" fill="#606060"/></svg>
<div class="a" style="left:2051px;top:1214px;width:4px;height:4px;background:#b8b8b8"></div>
<div class="a" style="left:2045px;top:1220px;width:4px;height:4px;background:#b8b8b8"></div>
<div class="a" style="left:2051px;top:1220px;width:4px;height:4px;background:#b8b8b8"></div>
<div class="a" style="left:2039px;top:1226px;width:4px;height:4px;background:#b8b8b8"></div>
<div class="a" style="left:2045px;top:1226px;width:4px;height:4px;background:#b8b8b8"></div>
<div class="a" style="left:2051px;top:1226px;width:4px;height:4px;background:#b8b8b8"></div>
<div class="a" style="left:486px;top:1236px;width:1576px;height:4px;background:#ffe8a6"></div>
<div class="a" style="left:4px;top:1248px;width:2058px;height:45px;background:linear-gradient(#fffdf4,#fdf0d2 50%,#fee7a4 51%,#fee7a4);border-radius:5px 5px 0 0"></div>
<div class="t" id="t48" style="left:13px;top:1259.68px;font-size:24px;line-height:30px;font-family:'Liberation Sans', sans-serif;color:#000;transform:scaleX(0.9278);">Search Results</div>
<svg class="a" style="left:1999px;top:1260px;" width="18" height="23" viewBox="0 0 18 23"><path d="M5 1H13V13H5Z" fill="none" stroke="#6b5a30" stroke-width="2.2"/><path d="M1 14H17" stroke="#6b5a30" stroke-width="2.5"/><path d="M9 14V22" stroke="#6b5a30" stroke-width="2.5"/></svg>
<svg class="a" style="left:2034px;top:1262px;" width="18" height="18" viewBox="0 0 18 18"><path d="M1.5 1.5L16.5 16.5M16.5 1.5L1.5 16.5" stroke="#6b5a30" stroke-width="2.6"/></svg>
<div class="a" style="left:4px;top:1292px;width:2058px;height:2px;background:#6e6e6e"></div>
<div class="a" style="left:4px;top:1294px;width:2058px;height:313px;background:#fff"></div>
<div class="a" style="left:4px;top:1292px;width:2px;height:316px;background:#6e6e6e"></div>
<div class="a" style="left:6px;top:1294px;width:2021px;height:280px;overflow:hidden">
<div class="cl" style="left:32px;top:3.35px">Searching for: Adler32</div>
<div class="cl" style="left:32px;top:35.35px">C:\Dev\CryptoPP\Version_8.2.0\adler32.cpp(8): void Adler32::Update(const byte *input, size_t length)</div>
<div class="cl" style="left:32px;top:67.35px">C:\Dev\CryptoPP\Version_8.2.0\adler32.cpp(56): void Adler32::TruncatedFinal(byte *hash, size_t size)</div>
<div class="cl" style="left:32px;top:99.35px">C:\Dev\CryptoPP\Version_8.2.0\adler32.h(14): class Adler32 : public HashTransformation</div>
<div class="cl" style="left:32px;top:131.35px">C:\Dev\CryptoPP\Version_8.2.0\adler32.h(18): Adler32() {Reset();}</div>
<div class="cl" style="left:32px;top:163.35px">C:\Dev\CryptoPP\Version_8.2.0\adler32.h(22): CRYPTOPP_STATIC_CONSTEXPR const char* StaticAlgorithmName() {return &quot;Adler32&quot;;}</div>
<div class="cl" style="left:32px;top:195.35px">C:\Dev\CryptoPP\Version_8.2.0\bench1.cpp(462): BenchMarkByNameKeyLess&lt;HashTransformation&gt;(&quot;Adler32&quot;);</div>
<div class="cl" style="left:32px;top:227.35px">C:\Dev\CryptoPP\Version_8.2.0\cryptlib.h(27): CRC32, CRC32C, Adler32</div>
<div class="cl" style="left:32px;top:259.35px">C:\Dev\CryptoPP\Version_8.2.0\regtest1.cpp(90): RegisterDefaultFactoryFor&lt;HashTransformation, Adler32&gt;();</div>
</div>
<div class="a" style="left:2027px;top:1294px;width:34px;height:280px;background:#f0f0f0"></div>
<svg class="a" style="left:2038px;top:1308px;" width="11" height="10" viewBox="0 0 11 10"><path d="M0 5.5L5.5 0L11 5.5V9.3L5.5 3.8L0 9.3Z" fill="#606060"/></svg>
<div class="a" style="left:2027px;top:1328px;width:32px;height:70px;background:#cdcdcd"></div>
<svg class="a" style="left:2038px;top:1552px;" width="11" height="10" viewBox="0 0 11 10"><path d="M0 0.2L5.5 5.7L11 0.2V4L5.5 9.5L0 4Z" fill="#606060"/></svg>
<div class="a" style="left:6px;top:1574px;width:2021px;height:33px;background:#f0f0f0"></div>
<div class="a" style="left:40px;top:1574px;width:736px;height:31px;background:#cdcdcd"></div>
<div class="a" style="left:6px;top:1607px;width:2055px;height:2px;background:#fff"></div>
<svg class="a" style="left:17px;top:1585px;" width="10" height="11" viewBox="0 0 10 11"><path d="M9.5 0L4 5.5L9.5 11H5.7L0.2 5.5L5.7 0Z" fill="#606060"/></svg>
<svg class="a" style="left:2003px;top:1585px;" width="10" height="11" viewBox="0 0 10 11"><path d="M0.2 0L5.7 5.5L0.2 11H4L9.5 5.5L4 0Z" fill="#606060"/></svg>
<div class="a" style="left:2027px;top:1574px;width:34px;height:33px;background:#f0f0f0"></div>
<div class="a" style="left:2px;top:1609px;width:2062px;height:42px;background:#293756;border-top:1px solid #1e2d4c;box-sizing:border-box"></div>
<div class="t" id="t49" style="left:9px;top:1620.53px;font-size:23px;line-height:29px;font-family:'Liberation Sans', sans-serif;color:#fff;transform:scaleX(0.9871);">For Help, press F1</div>
<div class="a" style="left:1495px;top:1615px;width:1px;height:35px;background:#d4d8e0"></div>
<div class="a" style="left:1567px;top:1615px;width:1px;height:35px;background:#d4d8e0"></div>
<div class="a" style="left:1633px;top:1615px;width:1px;height:35px;background:#d4d8e0"></div>
<div class="a" style="left:1704px;top:1615px;width:1px;height:35px;background:#d4d8e0"></div>
<div class="a" style="left:1759px;top:1615px;width:1px;height:35px;background:#d4d8e0"></div>
<div class="a" style="left:1834px;top:1615px;width:1px;height:35px;background:#d4d8e0"></div>
<div class="a" style="left:1902px;top:1615px;width:1px;height:35px;background:#d4d8e0"></div>
<div class="a" style="left:1958px;top:1615px;width:1px;height:35px;background:#d4d8e0"></div>
<div class="t" id="t50" style="left:1535px;top:1620.53px;font-size:23px;line-height:29px;font-family:'Liberation Sans', sans-serif;color:#fff;transform:scaleX(0.9377);">24</div>
<div class="t" id="t51" style="left:1614px;top:1620.53px;font-size:23px;line-height:29px;font-family:'Liberation Sans', sans-serif;color:#fff;transform:scaleX(0.8596);">1</div>
<div class="t" id="t52" style="left:1645px;top:1620.53px;font-size:23px;line-height:29px;font-family:'Liberation Sans', sans-serif;color:#fff;transform:scaleX(0.9093);">Read</div>
<div class="t" id="t53" style="left:1715px;top:1620.53px;font-size:23px;line-height:29px;font-family:'Liberation Sans', sans-serif;color:#7c7d7c;transform:scaleX(0.9650);">INS</div>
<div class="t" id="t54" style="left:1771px;top:1620.53px;font-size:23px;line-height:29px;font-family:'Liberation Sans', sans-serif;color:#7c7d7c;transform:scaleX(0.9778);">Block</div>
<div class="t" id="t55" style="left:1846px;top:1620.53px;font-size:23px;line-height:29px;font-family:'Liberation Sans', sans-serif;color:#7c7d7c;transform:scaleX(0.9190);">Sync</div>
<div class="t" id="t56" style="left:1914px;top:1620.53px;font-size:23px;line-height:29px;font-family:'Liberation Sans', sans-serif;color:#7c7d7c;transform:scaleX(0.8801);">Rec</div>
<div class="t" id="t57" style="left:1970px;top:1620.53px;font-size:23px;line-height:29px;font-family:'Liberation Sans', sans-serif;color:#7c7d7c;transform:scaleX(0.9124);">Caps</div>
<div class="a" style="left:2056px;top:1625px;width:3px;height:3px;background:#fff"></div>
<div class="a" style="left:2050px;top:1631px;width:3px;height:3px;background:#fff"></div>
<div class="a" style="left:2056px;top:1631px;width:3px;height:3px;background:#fff"></div>
<div class="a" style="left:2044px;top:1637px;width:3px;height:3px;background:#fff"></div>
<div class="a" style="left:2050px;top:1637px;width:3px;height:3px;background:#fff"></div>
<div class="a" style="left:2056px;top:1637px;width:3px;height:3px;background:#fff"></div>
<div class="a" style="left:2038px;top:1643px;width:3px;height:3px;background:#fff"></div>
<div class="a" style="left:2044px;top:1643px;width:3px;height:3px;background:#fff"></div>
<div class="a" style="left:2050px;top:1643px;width:3px;height:3px;background:#fff"></div>
<div class="a" style="left:2056px;top:1643px;width:3px;height:3px;background:#fff"></div>
</body></html>
